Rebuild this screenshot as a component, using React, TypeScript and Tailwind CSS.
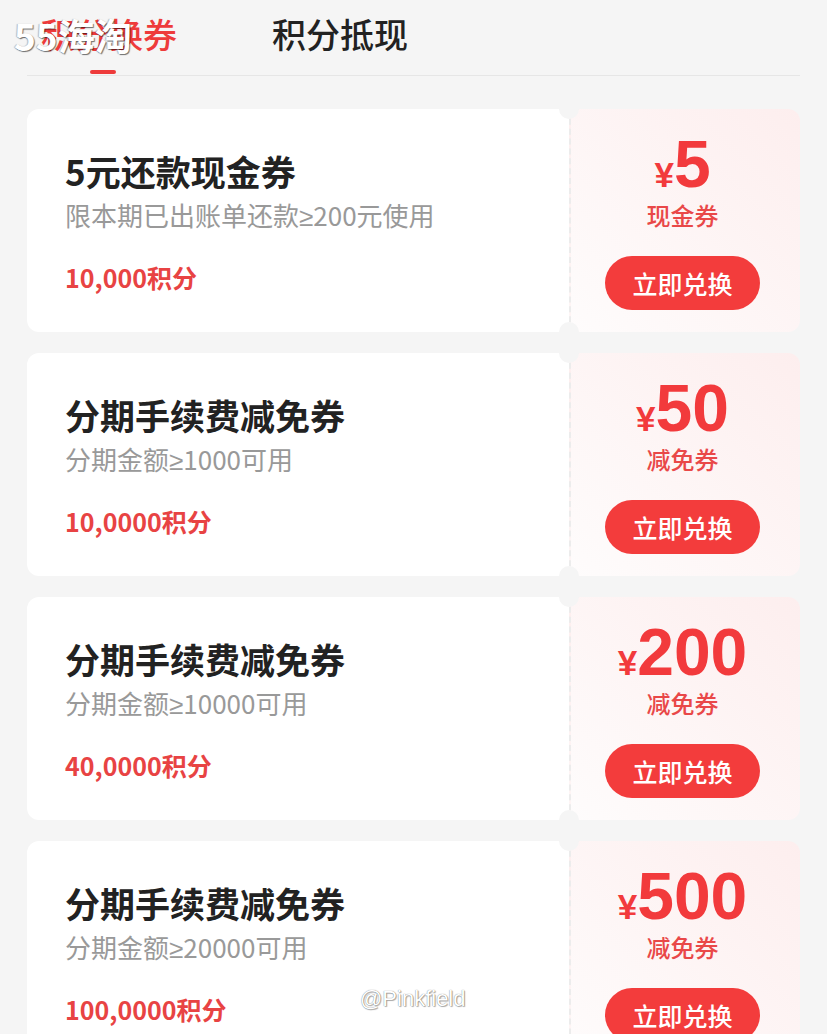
import React from "react";

type Coupon = {
  title: string;
  rule: [string, string];
  points: string;
  amount: string;
  kind: string;
};

const coupons: Coupon[] = [
  { title: "5元还款现金券", rule: ["限本期已出账单还款", "200元使用"], points: "10,000积分", amount: "5", kind: "现金券" },
  { title: "分期手续费减免券", rule: ["分期金额", "1000可用"], points: "10,0000积分", amount: "50", kind: "减免券" },
  { title: "分期手续费减免券", rule: ["分期金额", "10000可用"], points: "40,0000积分", amount: "200", kind: "减免券" },
  { title: "分期手续费减免券", rule: ["分期金额", "20000可用"], points: "100,0000积分", amount: "500", kind: "减免券" },
];

const cjk = "font-['Noto_Sans_CJK_SC','Noto_Sans',sans-serif]";

function CouponCard({ c }: { c: Coupon }) {
  return (
    <div className="relative flex h-[223px] shrink-0 rounded-[12px] overflow-hidden">
      <div className="w-[542px] bg-white pl-[38px] pt-[40px]">
        <div className="text-[35px] leading-[44px] font-bold text-[#222]">{c.title}</div>
        <div className="mt-[5px] text-[26px] leading-[34px] text-[#999]">
          {c.rule[0]}
          <span className="font-['Liberation_Sans',Arial,sans-serif]">≥</span>
          {c.rule[1]}
        </div>
        <div className="mt-[27px] text-[25px] leading-[32px] font-bold text-[#e84343]">{c.points}</div>
      </div>
      <div className="flex-1 flex flex-col items-center border-l-2 border-dashed border-[#ececec] bg-gradient-to-tr from-[#fefcfc] to-[#fdeeee] pt-[26px] pr-[6px]">
        <div className="flex items-baseline text-[#f23a3c] font-['Liberation_Sans',Arial,sans-serif] font-bold">
          <span className="text-[35px] leading-none">¥</span>
          <span className="text-[66px] leading-[58px]">{c.amount}</span>
        </div>
        <div className="mt-[7px] text-[24px] leading-[30px] font-medium text-[#e94848]">{c.kind}</div>
        <button className="mt-[26px] w-[155px] h-[54px] rounded-full bg-[#f33c3c] text-white text-[25px] font-medium leading-none">
          立即兑换
        </button>
      </div>
      <div className="absolute left-[532px] -top-[10px] w-[20px] h-[20px] rounded-full bg-[#f5f5f5]" />
      <div className="absolute left-[532px] -bottom-[10px] w-[20px] h-[20px] rounded-full bg-[#f5f5f5]" />
    </div>
  );
}

export default function App() {
  return (
    <div className={`relative w-[827px] h-[1034px] overflow-hidden bg-[#f5f5f5] ${cjk}`}>
      {/* tabs */}
      <div className="mx-[27px] h-[76px] border-b border-[#e6e6e6] flex items-start gap-[95px] pl-[14px] pt-[14px]">
        <div className="flex flex-col items-center">
          <span className="text-[34px] leading-[40px] font-medium text-[#ee3b3b]">积分换券</span>
          <span className="mt-[16px] w-[26px] h-[4px] rounded-full bg-[#ee3b3b] -translate-x-[6px]" />
        </div>
        <span className="text-[34px] leading-[40px] font-medium text-[#222]">积分抵现</span>
      </div>

      <div className="mx-[27px] mt-[33px] flex flex-col gap-[21px]">
        {coupons.map((c, i) => (
          <CouponCard key={i} c={c} />
        ))}
      </div>

      {/* watermarks */}
      <div className="absolute left-[14px] top-[13px] text-[37px] leading-[44px] font-bold text-white [text-shadow:1px_1px_1px_rgba(0,0,0,0.55),-1px_0_1px_rgba(0,0,0,0.25)]">
        55海淘
      </div>
      <div className="absolute left-[360px] top-[985px] text-[22px] leading-[28px] text-white font-['Liberation_Sans',Arial,sans-serif] [text-shadow:0_0_1px_rgba(0,0,0,0.6),1px_1px_1px_rgba(0,0,0,0.3)]">
        @Pinkfield
      </div>
    </div>
  );
}
